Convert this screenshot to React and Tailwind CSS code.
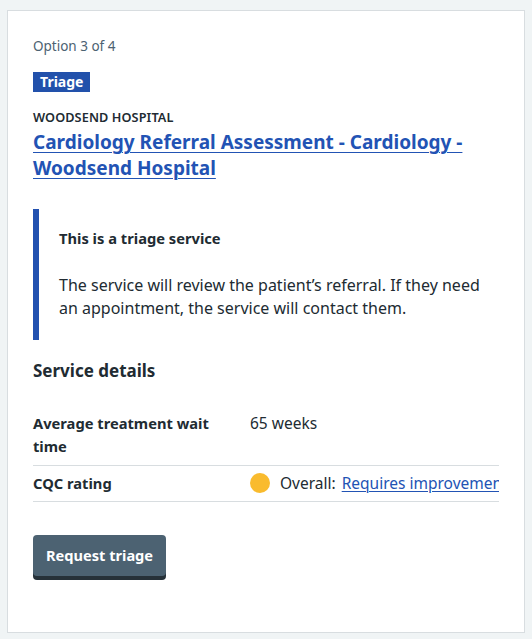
import React from 'react';

const rows = [
  { key: 'Average treatment wait time', value: '65 weeks' },
];

export default function App() {
  return (
    <div
      className="min-h-[639px] bg-[#f0f4f5] pl-[7px] pr-[7px] pt-[10px] pb-[6px] text-[#212b32]"
      style={{ fontFamily: '"Noto Sans", Arial, sans-serif' }}
    >
      <div className="border border-[#d8dde0] bg-white px-[25px] pt-[23px] pb-[56px]">
        <p className="text-[13.5px] leading-[24px] text-[#4c6272]">Option 3 of 4</p>

        <span className="mt-[14px] inline-block bg-[#2251ab] px-[7px] text-[14px] font-bold leading-[20px] text-white">
          Triage
        </span>

        <p className="mt-[14px] text-[12.7px] font-semibold uppercase leading-[20px] tracking-[0.1px]">
          Woodsend Hospital
        </p>
        <a
          href="#"
          className="mt-[2px] block text-[19px] font-bold leading-[26px] text-[#2253b4] underline decoration-1 underline-offset-[3px]"
        >
          Cardiology Referral Assessment - Cardiology - Woodsend Hospital
        </a>

        <div className="mt-[28px] border-l-[6px] border-[#2251b0] pl-[20px] pr-[16px] pt-[17px] pb-[20px]">
          <p className="text-[14.7px] font-bold leading-[24px]">This is a triage service</p>
          <p className="mt-[24px] text-[16px] leading-[23px]">
            The service will review the patient’s referral. If they need an appointment, the service will contact them.
          </p>
        </div>

        <h3 className="mt-[17px] text-[17px] font-bold leading-[28px]">Service details</h3>

        <div className="mt-[21px]">
          {rows.map((row) => (
            <div key={row.key} className="grid grid-cols-[217px_1fr] border-b border-[#d8dde0] pt-[6px] pb-[7px]">
              <div className="pr-[12px] text-[14.7px] font-bold leading-[23px]">{row.key}</div>
              <div className="text-[15.5px] leading-[23px]">{row.value}</div>
            </div>
          ))}
          <div className="grid grid-cols-[217px_1fr] border-b border-[#d8dde0] pt-[5px] pb-[6px]">
            <div className="text-[14.7px] font-bold leading-[24px]">CQC rating</div>
            <div className="flex items-center overflow-hidden whitespace-nowrap text-[15.5px] leading-[24px]">
              <span className="mr-[10px] h-[20px] w-[20px] shrink-0 rounded-full bg-[#f9bb2e]" />
              <span className="mr-[6px]">Overall:</span>
              <a href="#" className="text-[#2253b4] underline decoration-1 underline-offset-[2px]">
                Requires improvement
              </a>
            </div>
          </div>
        </div>

        <button className="mt-[33px] rounded-[4px] bg-[#4c6272] px-[13px] pt-[8px] pb-[9px] text-[14.6px] font-bold leading-[24px] text-white shadow-[0_4px_0_#263139]">
          Request triage
        </button>
      </div>
    </div>
  );
}
